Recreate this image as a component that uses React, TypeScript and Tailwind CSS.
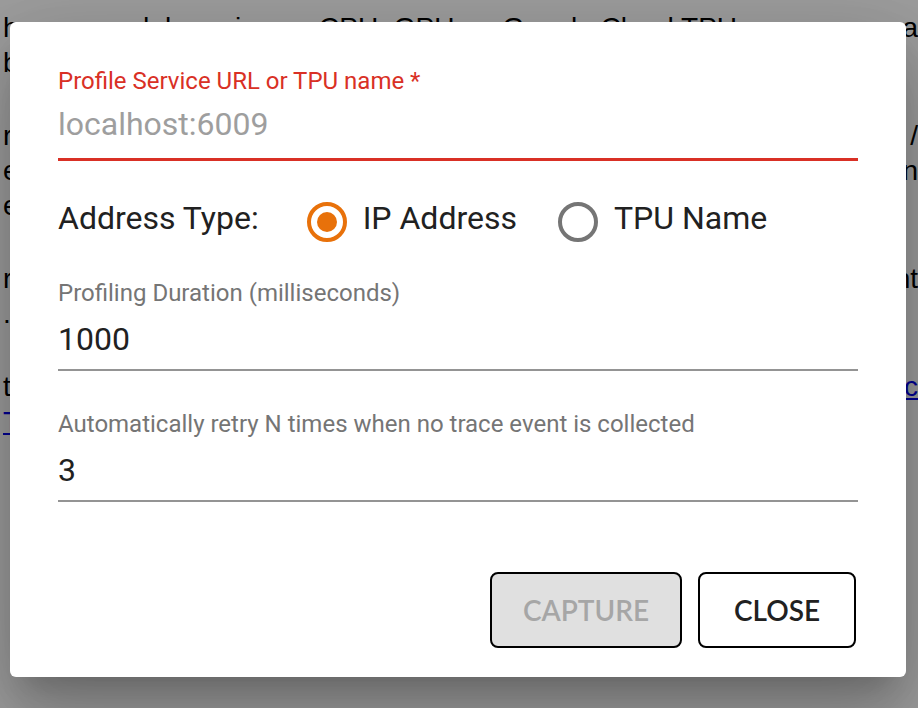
const pageLines: { left: string; right?: string; link?: boolean; rightLink?: boolean }[][] = [
  [
    { left: 'have a model running on CPU, GPU, or Google Cloud TPU, you may', right: 'na' },
    { left: 'be able to use the above button to capture a profile.' },
  ],
  [
    { left: 're a CPU or GPU user, please use the IP address option. You may', right: '/' },
    { left: 'eck out the tutorial on how to start a TensorFlow profiler server', right: 'n' },
    { left: 'e a Keras model on a GPU.' },
  ],
  [
    { left: 're a TPU user, please use the TPU name option and you may want', right: 'nt' },
    { left: '. the tutorial on how to interpret the profiling results.' },
  ],
  [
    { left: 'think profiling is done properly, please see the page of Google', right: 'c', rightLink: true },
    { left: 'Troubleshooting and FAQ and consider filing an issue on GitHub.', link: true },
  ],
];

function Radio({ checked, label }: { checked: boolean; label: string }) {
  return (
    <div className="flex items-start gap-[16px]">
      <span
        className={
          checked
            ? 'mt-[2px] flex h-[40px] w-[40px] items-center justify-center rounded-full border-[4px] border-[#e8710a]'
            : 'mt-[2px] flex h-[40px] w-[40px] items-center justify-center rounded-full border-[4px] border-[#757575]'
        }
      >
        {checked && <span className="h-[20px] w-[20px] rounded-full bg-[#e8710a]" />}
      </span>
      <span className="text-[32px] leading-[36px] text-[#212121]">{label}</span>
    </div>
  );
}

export default function App() {
  return (
    <div className="relative h-[708px] w-[918px] overflow-hidden bg-white">
      <div className="pt-[10px] font-['Liberation_Sans',Arial,sans-serif] text-[28px] leading-[35px] text-black">
        {pageLines.map((para, i) => (
          <div key={i} className="mb-[38px]">
            {para.map((line, j) => (
              <div key={j} className="flex justify-between overflow-hidden whitespace-nowrap">
                <span className={line.link ? 'pl-[3px] text-[#0000ee] underline' : 'pl-[3px]'}>{line.left}</span>
                {line.right && (
                  <span className={line.rightLink ? 'shrink-0 pl-2 text-[#0000ee] underline' : 'shrink-0 pl-2'}>
                    {line.right}
                  </span>
                )}
              </div>
            ))}
          </div>
        ))}
      </div>

      <div className="absolute inset-0 bg-[rgba(0,0,0,0.38)]" />

      <div className="absolute left-[10px] top-[22px] flex h-[655px] w-[896px] flex-col rounded-[6px] bg-white px-[48px] pt-[45px] font-['Roboto',sans-serif] shadow-[0_22px_30px_-14px_rgba(0,0,0,0.2),0_48px_76px_6px_rgba(0,0,0,0.14),0_18px_92px_16px_rgba(0,0,0,0.12)]">
        <div className="text-[24px] leading-[28px] text-[#d93025]">Profile Service URL or TPU name *</div>
        <div className="mt-[11px] text-[32px] leading-[36px] text-[#9e9e9e]">localhost:6009</div>
        <div className="mt-[16px] h-[3px] bg-[#d93025]" />

        <div className="mt-[39px] flex items-start">
          <span className="text-[32px] leading-[36px] text-[#212121]">Address Type:</span>
          <div className="ml-[48px] flex items-start gap-[41px]">
            <Radio checked label="IP Address" />
            <Radio checked={false} label="TPU Name" />
          </div>
        </div>

        <div className="mt-[37px] text-[24px] leading-[28px] text-[#757575]">Profiling Duration (milliseconds)</div>
        <div className="mt-[14px] text-[32px] leading-[36px] text-[#212121]">1000</div>
        <div className="mt-[12px] h-[2px] bg-[#949494]" />

        <div className="mt-[39px] text-[24px] leading-[28px] text-[#757575]">
          Automatically retry N times when no trace event is collected
        </div>
        <div className="mt-[14px] text-[32px] leading-[36px] text-[#212121]">3</div>
        <div className="mt-[12px] h-[2px] bg-[#949494]" />

        <div className="mr-[2px] mt-[70px] flex justify-end gap-[16px] font-['Lato',sans-serif] text-[28px] font-semibold">
          <button className="h-[76px] w-[192px] rounded-[8px] border-2 border-black bg-[#e0e0e0] text-[#a6a6a6]">
            CAPTURE
          </button>
          <button className="h-[76px] w-[158px] rounded-[8px] border-2 border-black bg-white text-[#212121]">
            CLOSE
          </button>
        </div>
      </div>
    </div>
  );
}
